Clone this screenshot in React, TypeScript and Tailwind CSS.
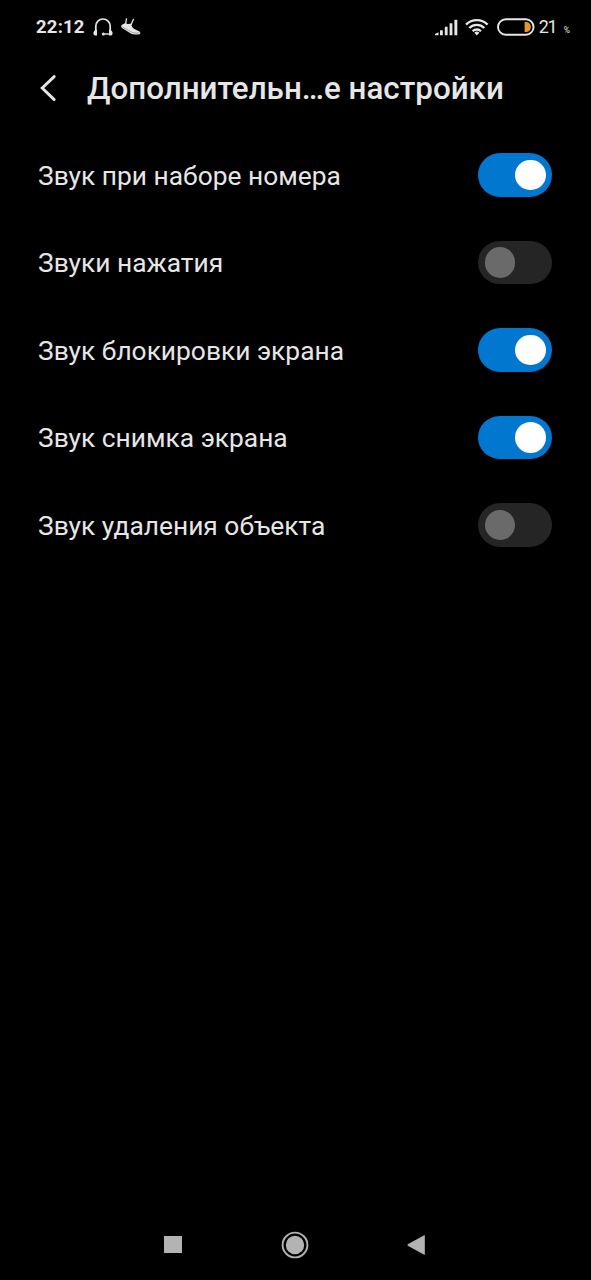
import { useState } from 'react';
import clsx from 'clsx';

const SETTINGS = [
  { id: 'dial', label: 'Звук при наборе номера', enabled: true },
  { id: 'touch', label: 'Звуки нажатия', enabled: false },
  { id: 'lock', label: 'Звук блокировки экрана', enabled: true },
  { id: 'screenshot', label: 'Звук снимка экрана', enabled: true },
  { id: 'delete', label: 'Звук удаления объекта', enabled: false },
];

function HeadphonesIcon() {
  return (
    <svg className="ml-2 shrink-0" width="20" height="20" viewBox="0 0 20 20" fill="none">
      <path d="M2.8 14V9.2a7.2 7.2 0 0 1 14.4 0V14" stroke="#e6e6e6" strokeWidth="1.7" />
      <path d="M16.8 17h-6" stroke="#e6e6e6" strokeWidth="1.4" />
      <path
        d="M4 12.4v6H2.2C1 18.4.4 17.4.4 16s1-3.200 3.600-3.600ZM16 12.400v6h1.800c1.200 0 1.800-1 1.800-2.400s-1-3.200-3.600-3.600Z"
        fill="#e6e6e6"
      />
      <circle cx="10.3" cy="17" r="1.5" fill="#e6e6e6" />
    </svg>
  );
}

function ShoeIcon() {
  return (
    <svg className="ml-2 shrink-0" width="20" height="20" viewBox="0 0 20 20" fill="none">
      <path d="M5.6 1.4 4.5 7.5M12.6 1.9 9.9 8" stroke="#e6e6e6" strokeWidth="1.3" />
      <path
        d="M.6 7.9 4.4 6l1.900.9 4-.1c.1 2.500 1.300 4.300 3.500 5.400l4.700 2.200c.9.500 1 1.600.5 2.500-2.900 1.200-6.700.8-9.200-.4L1 10.900C.2 9.900 0 8.700.6 7.900Z"
        fill="#e6e6e6"
      />
      <path d="m1.500 10 8.900 5c2.300 1.100 5 1.400 8 .7" stroke="#000" strokeOpacity="0.6" strokeWidth="0.5" />
    </svg>
  );
}

function SignalIcon() {
  return (
    <svg className="shrink-0" width="23" height="17" viewBox="0 0 23 17" fill="#e6e6e6">
      <path d="M0 16.3v-1.2l3.5-1.8v3z" />
      <rect x="5" y="11.2" width="2.8" height="5.1" rx="0.4" />
      <rect x="9.8" y="7.7" width="2.8" height="8.6" rx="0.4" />
      <rect x="14.6" y="4.3" width="2.8" height="12" rx="0.4" />
      <rect x="19.4" y="0.7" width="2.9" height="15.6" rx="0.4" />
    </svg>
  );
}

function WifiIcon() {
  return (
    <svg className="mr-px ml-[7px] shrink-0" width="24" height="18" viewBox="0 0 24 18" fill="none">
      <g stroke="#e6e6e6" strokeWidth="2.3">
        <path d="M1 6.6a15.2 15.2 0 0 1 21.6 0" />
        <path d="M4.3 10a10.5 10.5 0 0 1 15 0" />
        <path d="M7.6 13.2a6 6 0 0 1 8.4 0" />
      </g>
      <path d="m11.8 17.4-2.5-2.6a3.5 3.5 0 0 1 5 0z" fill="#e6e6e6" />
    </svg>
  );
}

function BatteryIcon() {
  return (
    <svg className="ml-[7px] shrink-0" width="38" height="18" viewBox="0 0 38 18" fill="none">
      <rect x="1" y="1.3" width="35.6" height="15.4" rx="7.7" stroke="#e6e6e6" strokeWidth="1.9" />
      <path d="M27.6 4H29c3 0 4.8 2.2 4.8 5S32 14 29 14h-1.4z" fill="#e39a2d" />
    </svg>
  );
}

function StatusBar() {
  return (
    <div className="flex h-[54px] shrink-0 items-center pr-[21px] pl-[36px]">
      <span className="w-[49px] pt-px text-[18.5px] leading-none font-bold tracking-[0.2px]">22:12</span>
      <HeadphonesIcon />
      <ShoeIcon />
      <div className="ml-auto flex items-center">
        <SignalIcon />
        <WifiIcon />
        <BatteryIcon />
        <span className="ml-1 w-[18px] text-[18px] leading-none tracking-[-1.3px]">21</span>
        <span className="ml-[7px] pt-1.5 text-[8.5px] leading-none">%</span>
      </div>
    </div>
  );
}

function Toggle({ checked, label, onChange }: { checked: boolean; label: string; onChange: () => void }) {
  return (
    <button
      role="switch"
      aria-checked={checked}
      aria-label={label}
      onClick={onChange}
      className={clsx(
        'flex h-[43.5px] w-[74px] shrink-0 items-center rounded-full px-[6.5px] transition-colors',
        checked ? 'justify-end bg-[#0277d0]' : 'justify-start bg-[#252525]',
      )}
    >
      <span className={clsx('size-[30.5px] rounded-full', checked ? 'bg-white' : 'bg-[#6a6a6a]')} />
    </button>
  );
}

function NavigationBar() {
  return (
    <div className="flex h-[71px] shrink-0 items-center justify-between pr-[165px] pl-[164px]">
      <button className="h-[17px] w-[18px] bg-[#b3b3b3]" aria-label="Recents" />
      <button aria-label="Home" className="pl-px">
        <svg className="block" width="28" height="28" viewBox="0 0 28 28" fill="none">
          <circle cx="14" cy="14" r="12.4" stroke="#b3b3b3" strokeWidth="1.9" />
          <circle cx="14" cy="14" r="9.2" fill="#b3b3b3" />
        </svg>
      </button>
      <button aria-label="Back">
        <svg className="block" width="19" height="20" viewBox="0 0 19 20">
          <path d="M17.4.6v18.8L1 10.5q-.7-.5 0-1z" fill="#b3b3b3" stroke="#b3b3b3" strokeWidth="0.8" />
        </svg>
      </button>
    </div>
  );
}

export default function App() {
  const [settings, setSettings] = useState(SETTINGS);

  const toggle = (id: string) =>
    setSettings((prev) => prev.map((s) => (s.id === id ? { ...s, enabled: !s.enabled } : s)));

  return (
    <div className="flex h-screen w-full flex-col bg-black font-[Roboto,sans-serif] text-[#e6e6e6]">
      <StatusBar />

      {/* Title bar */}
      <header className="flex h-[77px] shrink-0 items-center pb-[9px] pl-[38px]">
        <button aria-label="Back" className="w-[49px] shrink-0">
          <svg className="block" width="20" height="28" viewBox="0 0 20 28" fill="none">
            <path d="M16.2 2.6 4.2 14l12 11.6" stroke="#e6e6e6" strokeWidth="2.9" strokeLinecap="round" />
          </svg>
        </button>
        <h1 className="pt-[2px] text-[31.35px] leading-10 font-medium whitespace-nowrap">Дополнительн…е настройки</h1>
      </header>

      {/* Sound switches */}
      <main className="flex-1">
        {settings.map((s) => (
          <div key={s.id} className="flex h-[87.5px] items-center justify-between pr-[39px] pl-[38px]">
            <span className="pt-[2px] text-[26.35px] leading-8 whitespace-nowrap">{s.label}</span>
            <Toggle checked={s.enabled} label={s.label} onChange={() => toggle(s.id)} />
          </div>
        ))}
      </main>

      <NavigationBar />
    </div>
  );
}
